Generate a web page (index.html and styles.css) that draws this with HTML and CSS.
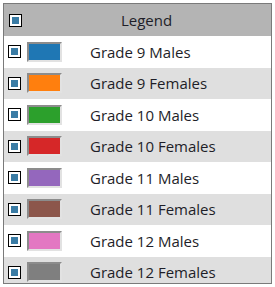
FILE: index.html
```
<!DOCTYPE html>
<html>
<head>
<meta charset="utf-8">
<link rel="stylesheet" href="styles.css">
</head>
<body>
<div class="legend">
  <div class="header">
    <span class="check"><span class="tick"></span></span>
    <span class="title">Legend</span>
  </div>
  <div class="row"><span class="check"><span class="tick"></span></span><span class="swatch" style="background:#1f77b4"></span><span class="label">Grade 9 Males</span></div>
  <div class="row alt"><span class="check"><span class="tick"></span></span><span class="swatch" style="background:#ff7f0e"></span><span class="label">Grade 9 Females</span></div>
  <div class="row"><span class="check"><span class="tick"></span></span><span class="swatch" style="background:#2ca02c"></span><span class="label">Grade 10 Males</span></div>
  <div class="row alt"><span class="check"><span class="tick"></span></span><span class="swatch" style="background:#d62728"></span><span class="label">Grade 10 Females</span></div>
  <div class="row"><span class="check"><span class="tick"></span></span><span class="swatch" style="background:#9467bd"></span><span class="label">Grade 11 Males</span></div>
  <div class="row alt"><span class="check"><span class="tick"></span></span><span class="swatch" style="background:#8c564b"></span><span class="label">Grade 11 Females</span></div>
  <div class="row"><span class="check"><span class="tick"></span></span><span class="swatch" style="background:#e377c2"></span><span class="label">Grade 12 Males</span></div>
  <div class="row alt"><span class="check"><span class="tick"></span></span><span class="swatch" style="background:#7f7f7f"></span><span class="label">Grade 12 Females</span></div>
</div>
</body>
</html>
```
FILE: styles.css
```
html, body {
  margin: 0;
  padding: 0;
  background: #ffffff;
}
body {
  padding: 3px 0 0 3px;
  font-family: "Open Sans", "Noto Sans", sans-serif;
  font-size: 15px;
  color: #1e1e28;
}
.legend {
  width: 267px;
  height: 279px;
  border: 1px solid #7a7a7a;
  overflow: hidden;
  display: flex;
  flex-direction: column;
  background: #ffffff;
}
.header {
  flex: 0 0 32px;
  height: 32px;
  background: #b4b4b4;
  display: flex;
  align-items: center;
  padding-left: 5px;
}
.title {
  flex: 1;
  text-align: center;
}
.row {
  flex: 0 0 31.5px;
  height: 31.5px;
  display: flex;
  align-items: center;
  padding-left: 4px;
  background: #ffffff;
}
.row.alt {
  background: #dfdfdf;
}
.check {
  box-sizing: border-box;
  width: 13px;
  height: 13px;
  border: 1px solid #000000;
  background: #ffffff;
  display: flex;
  align-items: center;
  justify-content: center;
  flex: 0 0 13px;
}
.tick {
  width: 7px;
  height: 7px;
  background: #3a7ca5;
}
.swatch {
  box-sizing: border-box;
  width: 35px;
  height: 20px;
  margin-left: 6px;
  border: 2px solid;
  border-color: #8c8c8c #e2e2e2 #e2e2e2 #8c8c8c;
  flex: 0 0 35px;
}
.label {
  margin-left: 28px;
  white-space: nowrap;
}
```
